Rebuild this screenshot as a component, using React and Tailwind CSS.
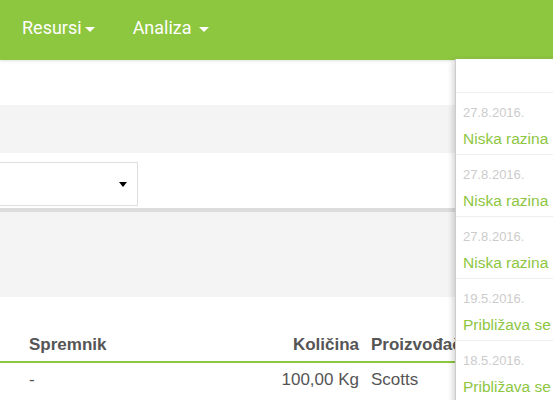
export default function App() {
    const notices = [
        { date: "27.8.2016.", title: "Niska razina" },
        { date: "27.8.2016.", title: "Niska razina" },
        { date: "27.8.2016.", title: "Niska razina" },
        { date: "19.5.2016.", title: "Približava se" },
        { date: "18.5.2016.", title: "Približava se" },
    ];

    return (
        <div className="relative w-[553px] h-[400px] overflow-hidden bg-white font-['Liberation_Sans',Arial,sans-serif]">
            <nav className="h-[60px] bg-[#8dc63f] shadow-[0_1px_3px_rgba(0,0,0,0.12)] flex items-start pt-[14px] pl-[22px] gap-[38px] font-['Roboto',sans-serif] text-[18px] text-white relative z-10">
                <span className="flex items-center">
                    Resursi
                    <span className="ml-[3px] mt-[3px] border-t-[5px] border-x-[5px] border-x-transparent border-t-white"></span>
                </span>
                <span className="flex items-center">
                    Analiza
                    <span className="ml-[7px] mt-[3px] border-t-[5px] border-x-[5px] border-x-transparent border-t-white"></span>
                </span>
            </nav>

            <div className="h-[45px]"></div>
            <div className="h-[48px] bg-[#f4f4f4]"></div>
            <div className="h-[55px] pt-[9px]">
                <div className="w-[139px] h-[44px] ml-[-1px] border border-[#dddddd] flex items-center justify-end pr-[10px]">
                    <span className="border-t-[5px] border-x-[4px] border-x-transparent border-t-black"></span>
                </div>
            </div>
            <div className="h-[4px] bg-[#dcdcdc]"></div>
            <div className="h-[85px] bg-[#f4f4f4]"></div>

            <div className="pt-[31px]">
                <div className="flex text-[17px] font-bold text-[#555] border-b-2 border-[#8dc63f] h-[35px] items-center">
                    <div className="w-[250px] pl-[29px]">Spremnik</div>
                    <div className="w-[109px] text-right">Količina</div>
                    <div className="pl-[12px] whitespace-nowrap">Proizvođač</div>
                </div>
                <div className="flex text-[17px] text-[#555] h-[34px] items-center">
                    <div className="w-[250px] pl-[29px]">-</div>
                    <div className="w-[109px] text-right">100,00 Kg</div>
                    <div className="pl-[12px]">Scotts</div>
                </div>
            </div>

            <div className="absolute left-[455px] top-[59px] w-[160px] h-[360px] bg-white border-l border-[#cccccc] shadow-[-2px_2px_6px_rgba(0,0,0,0.18)] z-20">
                <div className="h-[34px] border-b border-[#eeeeee]"></div>
                {notices.map((n, i) => (
                    <div key={i} className="h-[62px] border-b border-[#eeeeee] pl-[7px] pt-[12px]">
                        <div className="text-[13px] text-[#cccccc] leading-[16px]">{n.date}</div>
                        <div className="text-[15.5px] text-[#8dc63f] leading-[18px] mt-[9px] whitespace-nowrap">{n.title}</div>
                    </div>
                ))}
            </div>
        </div>
    );
}
